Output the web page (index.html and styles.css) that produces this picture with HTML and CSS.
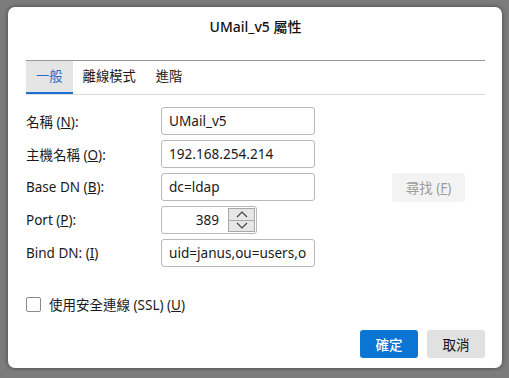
FILE: index.html
```html
<!DOCTYPE html>
<html lang="zh-Hant">
<head>
    <meta charset="UTF-8">
    <title>UMail_v5 屬性</title>
    <link rel="stylesheet" href="styles.css">
</head>
<body>

<div class="dialog">
    <div class="dialog-title">UMail_v5 屬性</div>

    <div class="tabs">
        <span class="tab active">一般</span>
        <span class="tab">離線模式</span>
        <span class="tab">進階</span>
    </div>

    <div class="form">
        <label class="field-label">名稱 (<u>N</u>):</label>
        <div class="input">UMail_v5</div>

        <label class="field-label">主機名稱 (<u>O</u>):</label>
        <div class="input">192.168.254.214</div>

        <label class="field-label">Base DN (<u>B</u>):</label>
        <div class="input">dc=ldap</div>
        <button class="find-btn">尋找 (<u>F</u>)</button>

        <label class="field-label">Port (<u>P</u>):</label>
        <div class="input port">
            <span class="port-value">389</span>
            <span class="spinner">
                <span class="spin-btn">
                    <svg width="12" height="7" viewBox="0 0 12 7"><path d="M1 6 L6 1 L11 6" fill="none" stroke="#444" stroke-width="1.2"/></svg>
                </span>
                <span class="spin-btn">
                    <svg width="12" height="7" viewBox="0 0 12 7"><path d="M1 1 L6 6 L11 1" fill="none" stroke="#444" stroke-width="1.2"/></svg>
                </span>
            </span>
        </div>

        <label class="field-label">Bind DN: (<u>I</u>)</label>
        <div class="input">uid=janus,ou=users,o</div>
    </div>

    <div class="check-row">
        <span class="checkbox"></span>
        <span>使用安全連線 (SSL) (<u>U</u>)</span>
    </div>

    <div class="actions">
        <button class="btn primary">確定</button>
        <button class="btn">取消</button>
    </div>
</div>

</body>
</html>
```

FILE: styles.css
```css
body {
    margin: 0;
    padding: 7px 0 0 8px;
    background-color: #7c7c7c;
    font-family: 'Noto Sans', 'Noto Sans CJK TC', sans-serif;
    font-size: 13.5px;
    color: #1a1a1a;
    height: 371px;
    box-sizing: border-box;
    overflow: hidden;
}

.dialog {
    width: 494px;
    height: 361px;
    box-sizing: border-box;
    padding: 0 17px 0 18px;
    background: #fff;
    border-radius: 7px;
    box-shadow: 0 0 5px rgba(0, 0, 0, 0.45);
}

.dialog-title {
    height: 40px;
    line-height: 40px;
    text-align: center;
    font-size: 14px;
    font-weight: 500;
    color: #111;
    margin-bottom: 13px;
}

/* Tabs */
.tabs {
    display: flex;
    border-top: 1px solid #9a9a9a;
    border-bottom: 1px solid #dcdcdc;
}

.tab {
    height: 33px;
    line-height: 31px;
    padding: 0 10px;
    font-size: 13.3px;
    box-sizing: border-box;
    border-bottom: 2px solid transparent;
}

.tab.active {
    background: #e5e5e5;
    color: #1f6fc5;
    border-bottom-color: #1a73d2;
}

/* Form */
.form {
    display: grid;
    grid-template-columns: 135px 96px 58px 77px 73px;
    grid-auto-rows: 28px;
    row-gap: 5px;
    margin-top: 12px;
    align-items: center;
}

.field-label {
    grid-column: 1;
}

.input {
    grid-column: 2 / span 2;
    height: 28px;
    box-sizing: border-box;
    border: 1px solid #b9b9b9;
    border-radius: 3px;
    padding: 0 7px;
    line-height: 26px;
    font-size: 13.6px;
    white-space: nowrap;
    overflow: hidden;
}

.input.port {
    grid-column: 2;
    display: flex;
    padding: 0 1px 0 7px;
}

.port-value {
    flex: 1;
    text-align: right;
    padding-right: 9px;
}

.spinner {
    display: flex;
    flex-direction: column;
    width: 27px;
    padding: 1px 0;
}

.spin-btn {
    flex: 1;
    display: flex;
    align-items: center;
    justify-content: center;
    background: #e6e6e6;
    border: 1px solid #a8a8a8;
}

.spin-btn + .spin-btn {
    border-top: none;
}

.find-btn {
    grid-column: 5;
    height: 29px;
    border: none;
    border-radius: 3px;
    background: #f3f3f3;
    color: #9c9c9c;
    font-family: inherit;
    font-size: 13.5px;
}

/* Checkbox */
.check-row {
    display: flex;
    align-items: center;
    gap: 8px;
    margin-top: 27px;
}

.checkbox {
    width: 15px;
    height: 15px;
    box-sizing: border-box;
    border: 1px solid #8a8a8a;
    border-radius: 2px;
}

/* Buttons */
.actions {
    display: flex;
    justify-content: flex-end;
    gap: 9px;
    margin-top: 16px;
}

.btn {
    width: 58px;
    height: 28px;
    border: none;
    border-radius: 3px;
    background: #e1e1e1;
    color: #111;
    font-family: inherit;
    font-size: 13.5px;
}

.btn.primary {
    background: #0a75d2;
    color: #fff;
    font-weight: 500;
}
```
